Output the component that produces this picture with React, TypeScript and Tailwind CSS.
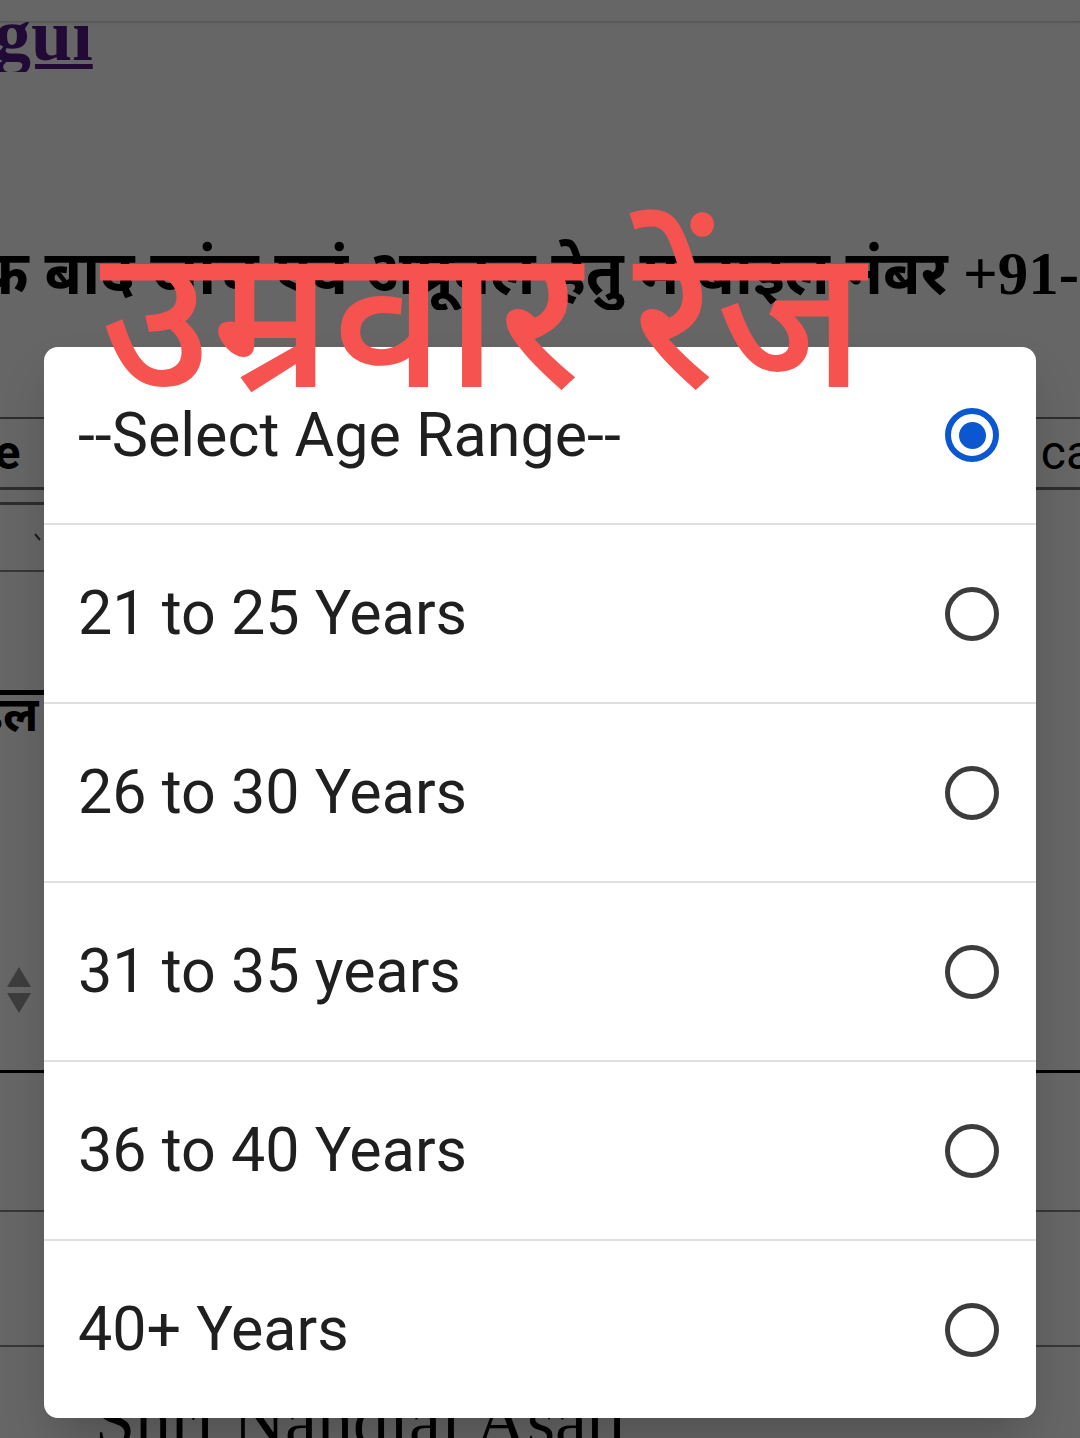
import React, { useState } from 'react';

const options = [
  '--Select Age Range--',
  '21 to 25 Years',
  '26 to 30 Years',
  '31 to 35 years',
  '36 to 40 Years',
  '40+ Years',
];

const Radio = ({ checked }: { checked: boolean }) =>
  checked ? (
    <span className="flex h-[54px] w-[54px] items-center justify-center rounded-full border-[6px] border-[#0b57d0]">
      <span className="h-[27px] w-[27px] rounded-full bg-[#0b57d0]" />
    </span>
  ) : (
    <span className="h-[54px] w-[54px] rounded-full border-[5px] border-[#3c3c3c]" />
  );

// the form page that sits behind the dialog
function PageBehind() {
  return (
    <div className="flex flex-col font-['Liberation_Serif',serif] text-black">
      <div className="h-[22px] border-b border-[#d8d8d8] shadow-sm" />
      <div className="h-[50px] overflow-hidden">
        <span className="-mt-[24px] -ml-[6px] block text-[74px] font-bold leading-none text-[#551a8b] underline decoration-[5px] underline-offset-[4px]">
          gui
        </span>
      </div>
      <div className="h-[166px]" />
      <div className="h-[72px] overflow-hidden whitespace-nowrap">
        <span className="-ml-[22px] block text-[61px] leading-[72px]">
          <span className="font-['Noto_Sans_Devanagari','Noto_Sans',sans-serif] font-bold">
            क बाद जांच एवं अप्रूवल हेतु मोबाइल नंबर
          </span>{' '}
          <span className="font-bold">+91-</span>
        </span>
      </div>
      <div className="h-[107px]" />

      {/* table rows */}
      <div className="flex h-[70px] items-center justify-between border-t-2 border-[#707070] font-['Roboto',sans-serif] text-[48px]">
        <span className="-ml-[33px] font-bold">Te</span>
        <span className="-mr-[12px]">ca</span>
      </div>
      <div className="flex h-[15px] border-t-[3px] border-[#707070]" />
      <div className="flex h-[68px]">
        <div className="flex w-[60px] items-center border-t-[3px] border-[#707070]">
          <svg className="ml-[34px]" width="12" height="12" viewBox="0 0 12 12">
            <path d="M1 2 L6 8" stroke="#444" strokeWidth="2" fill="none" />
          </svg>
        </div>
      </div>
      <div className="flex h-[120px]">
        <div className="w-[60px] border-t-2 border-[#8a8a8a]" />
      </div>
      <div className="flex h-[380px]">
        <div className="flex w-[60px] flex-col overflow-hidden border-t-[5px] border-black">
          <span className="-ml-[22px] whitespace-nowrap font-['Noto_Sans_Devanagari','Noto_Sans',sans-serif] text-[48px] font-bold leading-[50px]">
            इल
          </span>
          <div className="mt-[222px] ml-[6px] flex flex-col gap-[4px]">
            <svg width="26" height="22" viewBox="0 0 26 22">
              <path d="M13 0 L25 20 L1 20 Z" fill="#9a9a9a" />
            </svg>
            <svg width="26" height="22" viewBox="0 0 26 22">
              <path d="M13 20 L25 0 L1 0 Z" fill="#9a9a9a" />
            </svg>
          </div>
        </div>
      </div>
      <div className="h-[140px] border-t-[3px] border-black" />
      <div className="h-[135px] border-t-2 border-[#8a8a8a]" />
      <div className="h-[100px] border-t-2 border-[#8a8a8a] pl-[95px]">
        <span className="block pt-[38px] text-[72px] leading-none">Shri Nandlal Asati</span>
      </div>
    </div>
  );
}

export default function App() {
  const [value, setValue] = useState(0);

  return (
    <div className="relative h-[1438px] w-[1080px] overflow-hidden bg-white">
      <PageBehind />

      {/* scrim */}
      <div className="absolute inset-0 bg-black/60" />

      {/* age range picker */}
      <div className="absolute left-[44px] top-[347px] w-[992px] overflow-hidden rounded-[14px] bg-white font-['Roboto',sans-serif] shadow-2xl">
        {options.map((opt, i) => (
          <button
            key={opt}
            onClick={() => setValue(i)}
            className={
              'flex w-full items-center justify-between pl-[34px] pr-[37px] text-left ' +
              (i === 0 ? 'h-[176px]' : 'h-[179px] border-t-2 border-[#e0e0e0]')
            }
          >
            <span className="text-[61px] leading-none text-[#1f1f1f]">{opt}</span>
            <Radio checked={value === i} />
          </button>
        ))}
      </div>

      {/* caption drawn over the screenshot */}
      <div className="pointer-events-none absolute left-[100px] top-[240px] whitespace-nowrap font-['Noto_Sans_Devanagari','Noto_Sans',sans-serif] text-[198px] font-medium leading-none text-[#f65350]">
        उम्रवार रेंज
      </div>
    </div>
  );
}
